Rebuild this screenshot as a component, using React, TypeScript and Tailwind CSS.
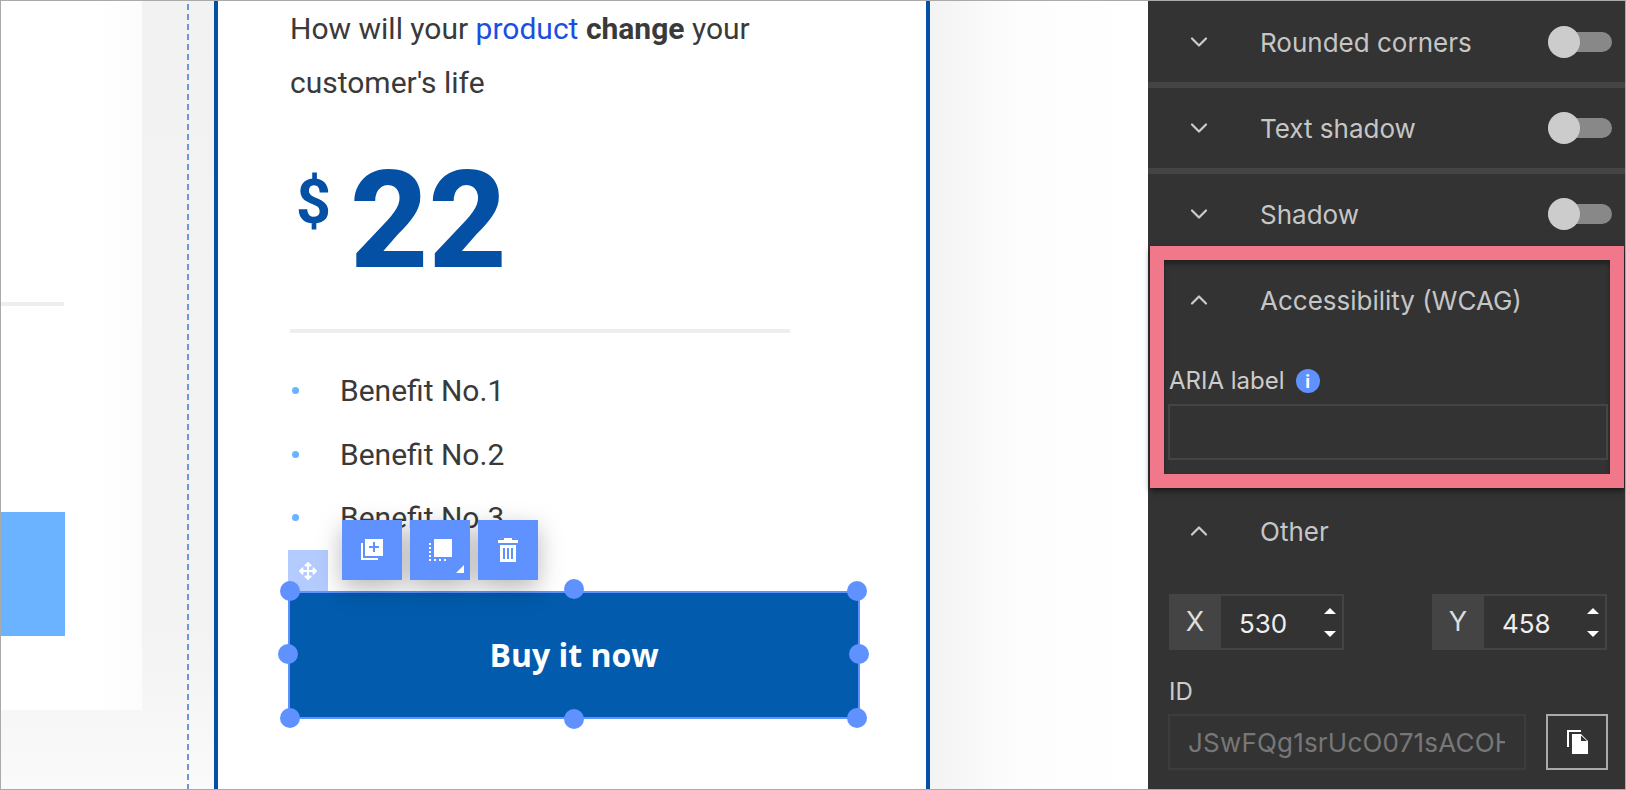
import { ChevronDown, ChevronUp } from 'lucide-react'
import { FaArrowsAlt } from 'react-icons/fa'

const INTER = 'font-["Inter",sans-serif]'

function Toggle() {
  return (
    <div className="relative mr-[13px] ml-auto h-5 w-[64px] rounded-full bg-[#888]">
      <div className="absolute top-[-6px] left-0 h-8 w-8 rounded-full bg-[#ccc]" />
    </div>
  )
}

function SectionRow({ title, open, toggle, indent }: { title: string; open?: boolean; toggle?: boolean; indent: string }) {
  const Icon = open ? ChevronUp : ChevronDown
  return (
    <div className="flex h-20 items-center">
      <div className={`${indent} mr-[47px] w-[28px] text-[#ccc]`}>
        <Icon size={28} strokeWidth={1.9} />
      </div>
      <span className="text-[26px] text-[#c6c6c6]">{title}</span>
      {toggle && <Toggle />}
    </div>
  )
}

function Stepper({ label, value }: { label: string; value: string }) {
  return (
    <div className="flex h-14 w-[175px] border-2 border-[#444]">
      <div className="flex w-[50px] items-center justify-center pr-[2px] bg-[#444] text-[27px] text-[#ddd]">{label}</div>
      <div className="flex flex-1 items-center pt-[2px] pl-[18px] text-[26px] text-[#eee]">{value}</div>
      <div className="mr-[6px] flex flex-col justify-center gap-[17px]">
        <div className="h-0 w-0 border-x-[6px] border-b-[6px] border-x-transparent border-b-white" />
        <div className="h-0 w-0 border-x-[6px] border-t-[6px] border-x-transparent border-t-white" />
      </div>
    </div>
  )
}

function Handle({ className }: { className: string }) {
  return <div className={`absolute h-5 w-5 rounded-full bg-[#5f92ff] ${className}`} />
}

function ToolButton({ children }: { children: React.ReactNode }) {
  return <div className="relative flex h-[60px] w-[60px] items-center justify-center bg-[#5f92ff]">{children}</div>
}

function Benefit({ text }: { text: string }) {
  return (
    <li className="flex h-[63.5px] items-center">
      <span className="mr-[41px] ml-[2px] h-[7px] w-[7px] rounded-full bg-[#6bb3ff]" />
      {text}
    </li>
  )
}

export default function App() {
  return (
    <div className="flex h-[790px] w-[1626px] overflow-hidden border border-[#aaa] bg-white">
      {/* previous page column and gutter */}
      <div className="flex w-[213px] shrink-0 bg-gradient-to-b from-[#f2f2f2] via-[#f3f3f3] via-80% to-[#fafafa]">
        <div className="flex h-[709px] w-[141px] shrink-0 flex-col bg-gradient-to-r from-white from-70% to-[#fcfcfc]">
          <div className="mt-[301px] h-1 w-[63px] bg-[#eee]" />
          <div className="mt-[206px] h-[124px] w-[64px] bg-[#6bb3ff]" />
        </div>
        <div className="mt-[3px] ml-[45px] w-[2px] bg-[repeating-linear-gradient(to_bottom,#6f95d6_0_6px,transparent_6px_10px)]" />
      </div>

      {/* current page */}
      <div className="w-[716px] shrink-0 border-x-4 border-[#0450a5] bg-white pl-[72px] font-['Roboto',sans-serif] text-[#3a3a3a]">
        <p className="mt-px w-[500px] text-[30px] leading-[54px]">
          How will your <span className="text-[#1a4fe0]">product</span> <b>change</b> your customer's life
        </p>
        <div className="mt-[43px] flex h-[136px] items-start pl-[6px] font-extrabold text-[#0450a5]">
          <span className="mt-[19px] text-[61px] leading-none font-bold">$</span>
          <span className="ml-[19px] text-[136px] leading-none">22</span>
        </div>
        <div className="mt-[40px] h-1 w-[500px] bg-[#eee]" />
        <ul className="mt-[26px] text-[30px]">
          <Benefit text="Benefit No.1" />
          <Benefit text="Benefit No.2" />
          <Benefit text="Benefit No.3" />
        </ul>
        <div className="relative mt-[41.5px] ml-[-2px] h-[128px] w-[572px]">
          <div className="flex h-full items-center justify-center border-2 border-[#5f92ff] bg-[#025bac] font-['Open_Sans',sans-serif] text-[32px] font-bold text-white">
            Buy it now
          </div>
          <div className="absolute top-[-41px] left-0 flex h-[41px] w-10 items-center justify-center bg-[#b3cbff] text-white">
            <FaArrowsAlt size={18} />
          </div>
          <div className="absolute top-[-71px] left-[54px] flex gap-2 drop-shadow-[0_8px_12px_rgba(0,0,0,0.28)]">
            <ToolButton>
              <svg width="24" height="24" viewBox="0 0 24 24" fill="#fff">
                <path d="M1 5h2v15h15v2H1zM5 1h18v17H5zm8 3v4H9v2h4v4h2v-4h4V8h-4V4z" fillRule="evenodd" />
              </svg>
            </ToolButton>
            <ToolButton>
              <svg width="24" height="24" viewBox="0 0 24 24" fill="#fff">
                <path d="M6 1h18v18H6zM1 5h2v2H1zm0 4h2v2H1zm0 4h2v2H1zm0 4h2v2H1zm0 4h2v2H1zm5 0h2v2H6zm5 0h2v2h-2zm5 0h2v2h-2z" />
              </svg>
              <div className="absolute right-[6px] bottom-[7px] h-2 w-2 bg-white [clip-path:polygon(100%_0,100%_100%,0_100%)]" />
            </ToolButton>
            <ToolButton>
              <svg width="24" height="24" viewBox="0 0 24 24" fill="#fff">
                <path d="M8 0h8v2h6v3H2V2h6zM4 7h16v17H4zm3 3v11h2V10zm4 0v11h2V10zm4 0v11h2V10z" fillRule="evenodd" />
              </svg>
            </ToolButton>
          </div>
          <Handle className="top-[-10px] left-[-8px]" />
          <Handle className="top-[-12px] left-[276px]" />
          <Handle className="top-[-10px] right-[-7px]" />
          <Handle className="top-[53px] left-[-10px]" />
          <Handle className="top-[53px] right-[-9px]" />
          <Handle className="bottom-[-9px] left-[-8px]" />
          <Handle className="bottom-[-10px] left-[276px]" />
          <Handle className="bottom-[-9px] right-[-7px]" />
        </div>
      </div>

      {/* fade towards the settings panel */}
      <div className="flex-1 bg-gradient-to-r from-[#f3f3f3] via-[#fdfdfd] via-40% to-white" />

      {/* settings panel */}
      <div className={`w-[477px] shrink-0 bg-[#333] ${INTER}`}>
        <div className="h-[81px] pt-[1px]">
          <SectionRow title="Rounded corners" toggle indent="ml-[37px]" />
        </div>
        <div className="h-[6px] bg-[#444]" />
        <SectionRow title="Text shadow" toggle indent="ml-[37px]" />
        <div className="h-[6px] bg-[#444]" />
        <div className="h-[72px]">
          <SectionRow title="Shadow" toggle indent="ml-[37px]" />
        </div>

        <div className="mr-px ml-[2px] border-[14px] border-[#f0788a] shadow-[0_3px_6px_rgba(0,0,0,0.55)]">
          <div className="h-[214px] shadow-[inset_0_4px_5px_rgba(0,0,0,0.35)]">
            <SectionRow title="Accessibility (WCAG)" open indent="ml-[21px]" />
            <div className="mt-[29px] flex h-6 items-center gap-[11px] pl-[5px] text-[24px] text-[#ccc]">
              ARIA label
              <span className="flex h-6 w-6 items-center justify-center rounded-full bg-[#5f92ff] font-['Roboto',sans-serif] text-[18px] font-bold text-white">
                i
              </span>
            </div>
            <div className="mt-[11px] mr-[2px] ml-[4px] h-14 border-2 border-[#444]" />
          </div>
        </div>

        <div className="mt-[3px]">
          <SectionRow title="Other" open indent="ml-[37px]" />
        </div>
        <div className="mt-[23px] mr-[18px] ml-[21px] flex justify-between">
          <Stepper label="X" value="530" />
          <Stepper label="Y" value="458" />
        </div>
        <div className="mt-[30px] ml-[21px] text-[24px] leading-6 text-[#ccc]">ID</div>
        <div className="mt-[10px] mr-[17px] ml-[20px] flex justify-between">
          <div className="flex h-14 w-[358px] items-center border-2 border-[#3c3c3c] pl-[18px]">
            <span className="w-[317px] overflow-hidden text-[26px] tracking-[0.2px] whitespace-nowrap text-[#777]">JSwFQg1srUcO071sACOH</span>
          </div>
          <div className="flex h-14 w-[62px] items-center justify-center border-2 border-[#aaa]">
            <svg width="24" height="26" viewBox="0 0 24 26" fill="#fff">
              <path d="M2 1h14v2H4v15H2zM7 5h9l7 7v13H7zm9 1.5V12h6z" fillRule="evenodd" />
            </svg>
          </div>
        </div>
      </div>
    </div>
  )
}
